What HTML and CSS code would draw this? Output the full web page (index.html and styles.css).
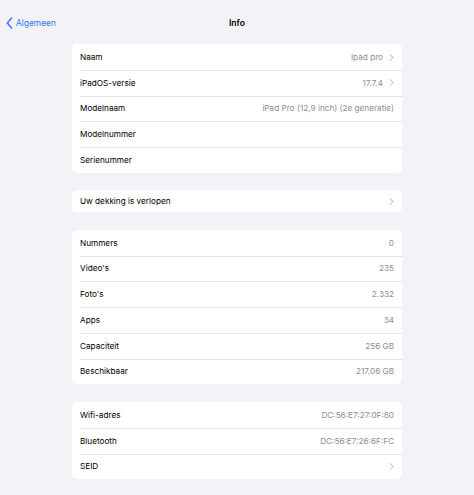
FILE: index.html
```html
<!DOCTYPE html>
<html lang="nl">
<head>
<meta charset="utf-8">
<title>Info</title>
<link rel="stylesheet" href="styles.css">
</head>
<body>
<header class="nav">
  <a class="back" href="#">
    <svg class="back-icon" width="7" height="12" viewBox="0 0 7 12"><path d="M5.6 1 1.3 6 5.6 11" fill="none" stroke="#3478f6" stroke-width="1.5" stroke-linecap="round" stroke-linejoin="round"/></svg>
    <span>Algemeen</span>
  </a>
  <h1 class="title">Info</h1>
</header>
<main class="content">
  <section class="group">
    <div class="row"><span class="label">Naam</span><span class="value">Ipad pro</span><span class="chev"></span></div>
    <div class="row"><span class="label">iPadOS-versie</span><span class="value">17.7.4</span><span class="chev"></span></div>
    <div class="row"><span class="label">Modelnaam</span><span class="value">iPad Pro (12,9 inch) (2e generatie)</span></div>
    <div class="row"><span class="label">Modelnummer</span></div>
    <div class="row"><span class="label">Serienummer</span></div>
  </section>
  <section class="group">
    <div class="row single"><span class="label">Uw dekking is verlopen</span><span class="chev"></span></div>
  </section>
  <section class="group">
    <div class="row"><span class="label">Nummers</span><span class="value">0</span></div>
    <div class="row"><span class="label">Video's</span><span class="value">235</span></div>
    <div class="row"><span class="label">Foto's</span><span class="value">2.332</span></div>
    <div class="row"><span class="label">Apps</span><span class="value">34</span></div>
    <div class="row"><span class="label">Capaciteit</span><span class="value">256 GB</span></div>
    <div class="row"><span class="label">Beschikbaar</span><span class="value">217,06 GB</span></div>
  </section>
  <section class="group">
    <div class="row"><span class="label">Wifi-adres</span><span class="value">DC:56:E7:27:0F:80</span></div>
    <div class="row"><span class="label">Bluetooth</span><span class="value">DC:56:E7:26:6F:FC</span></div>
    <div class="row"><span class="label">SEID</span><span class="value"></span><span class="chev"></span></div>
  </section>
</main>
</body>
</html>
```
FILE: styles.css
```css
html, body {
  margin: 0;
  padding: 0;
}
body {
  background: #f2f2f7;
  font-family: Inter, "Liberation Sans", sans-serif;
  color: #000;
  font-size: 8.2px;
  width: 474px;
  height: 495px;
  overflow: hidden;
}
.nav {
  position: relative;
  height: 44px;
  box-sizing: border-box;
  padding-top: 1px;
  display: flex;
  align-items: center;
  justify-content: center;
}
.back {
  position: absolute;
  left: 6px;
  top: 1px;
  height: 43px;
  display: flex;
  align-items: center;
  gap: 3px;
  color: #3478f6;
  text-decoration: none;
  font-size: 8.4px;
}
.back-icon {
  display: block;
}
.title {
  margin: 0;
  font-size: 8.6px;
  font-weight: 600;
}
.content {
  padding: 0 72px 0 71.5px;
  display: flex;
  flex-direction: column;
  gap: 17.7px;
}
.group {
  background: #fff;
  border-radius: 5px;
  overflow: hidden;
}
.row {
  height: 25.75px;
  display: flex;
  align-items: center;
  padding: 0 8px 0 8.5px;
  position: relative;
  box-sizing: border-box;
}
.row + .row::before {
  content: "";
  position: absolute;
  left: 8px;
  right: 0;
  top: 0;
  height: 1px;
  background: #e4e4e8;
}
.row.single {
  height: 21.7px;
}
.label {
  flex: 1;
  white-space: nowrap;
}
.value {
  color: #8e8e93;
  white-space: nowrap;
}
.chev {
  width: 3.5px;
  height: 3.5px;
  border-top: 1px solid #c7c7cc;
  border-right: 1px solid #c7c7cc;
  transform: rotate(45deg);
  margin-left: 5px;
  margin-right: 1.5px;
}
```
